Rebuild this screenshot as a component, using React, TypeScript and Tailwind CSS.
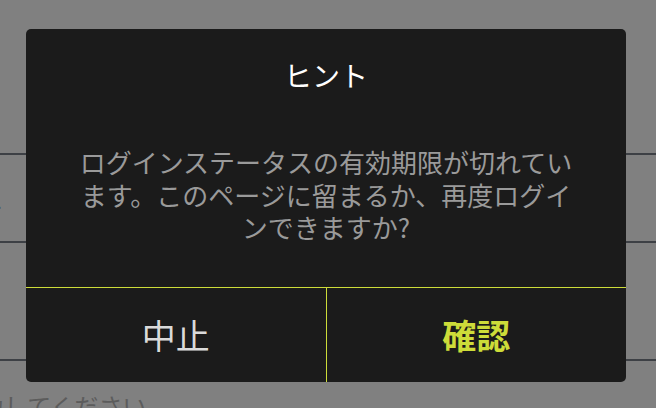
import React from 'react'

const jp = "font-['Noto_Sans_CJK_JP',_'Noto_Sans',_sans-serif]"

function BackgroundForm() {
  return (
    <div className="flex flex-col">
      <div className="h-[153px]" />
      <div className="h-[2px] bg-[#3d4045]" />
      <div className="flex h-[86px] items-center">
        <span className="ml-[-22px] text-[24px] leading-[24px] text-[#111]">ム</span>
      </div>
      <div className="h-[2px] bg-[#3d4045]" />
      <div className="h-[116px]" />
      <div className="h-[2px] bg-[#3d4045]" />
      <div className="ml-[-44px] mt-[33px] whitespace-nowrap text-[24px] leading-[24px] text-[#5c5c5c]">
        入力してください
      </div>
    </div>
  )
}

function Dialog() {
  return (
    <div className="absolute left-[26px] top-[29px] w-[600px] overflow-hidden rounded-[5px] bg-[#1b1b1b]">
      <div className="pt-[26px] text-center text-[28px] leading-[40px] text-white">ヒント</div>
      <p className="mt-[51px] px-[50px] text-center text-[26px] leading-[32.5px] text-[#9a9a9a]">
        ログインステータスの有効期限が切れています。このページに留まるか、再度ログインできますか?
      </p>
      <div className="mt-[43px] flex h-[95px] border-t border-[#cddc39]">
        <button className="flex flex-1 items-center justify-center text-[34px] text-[#dadada]">
          中止
        </button>
        <div className="w-px bg-[#cddc39]" />
        <button className="flex flex-1 items-center justify-center text-[34px] font-bold text-[#cddc39]">
          確認
        </button>
      </div>
    </div>
  )
}

export default function App() {
  return (
    <div className={`relative h-[408px] w-[656px] overflow-hidden bg-[#808080] ${jp}`}>
      <BackgroundForm />
      <Dialog />
    </div>
  )
}
